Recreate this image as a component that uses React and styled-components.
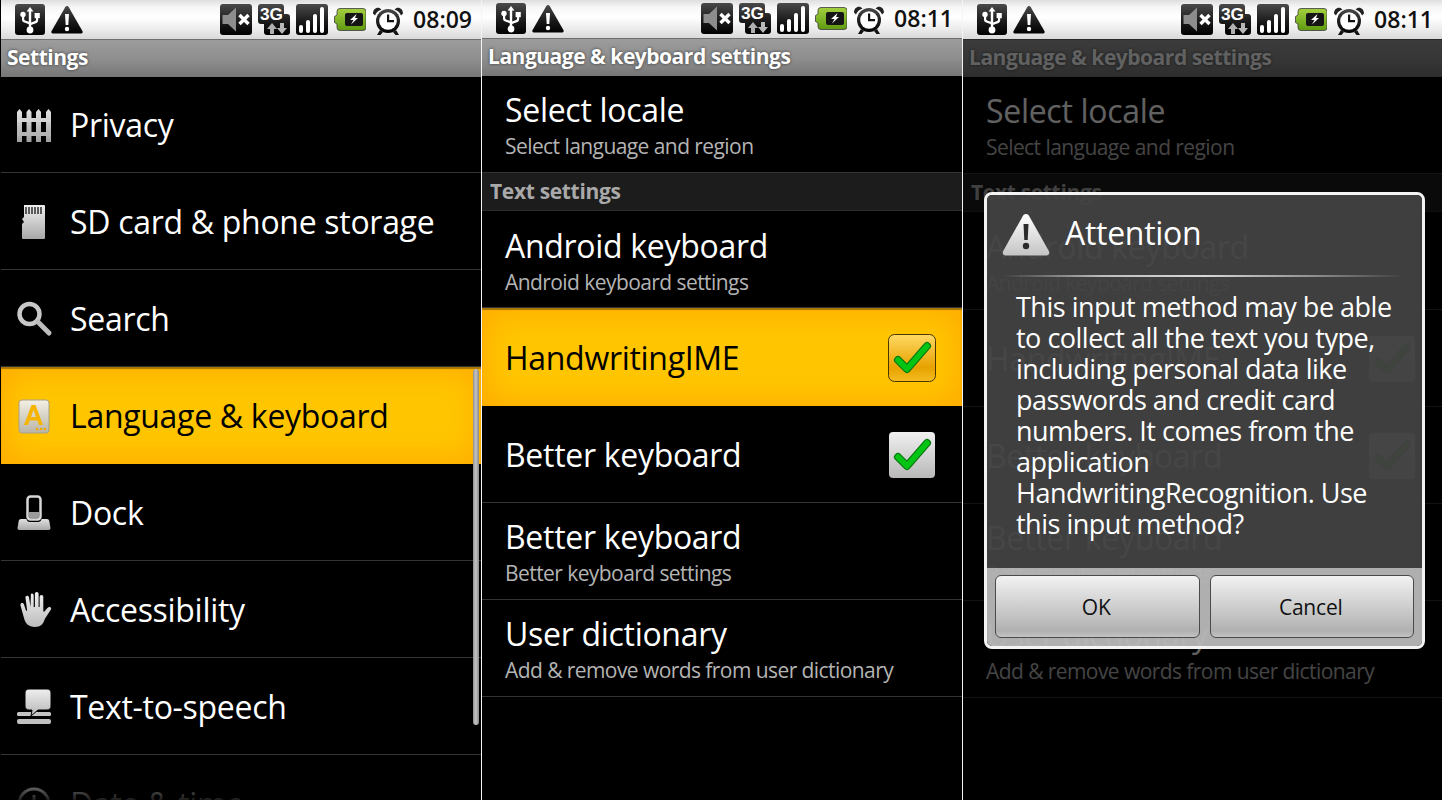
import React from "react";
import styled, { createGlobalStyle } from "styled-components";

const Global = createGlobalStyle`
  html, body { margin: 0; padding: 0; background: #000; }
  body { font-family: "Open Sans", "Noto Sans", sans-serif; }
`;

const Page = styled.div`
  display: flex;
  width: 1442px;
  height: 800px;
  padding-left: 1px;
  box-sizing: border-box;
  overflow: hidden;
  background: #000;
`;

const Phone = styled.section`
  position: relative;
  flex: none;
  width: ${(p) => p.$w || 480}px;
  height: 800px;
  overflow: hidden;
  background: #000;
  border-right: ${(p) => (p.$last ? "none" : "1px solid #f4f4f4")};
`;

const StatusBar = styled.div`
  display: flex;
  align-items: center;
  height: ${(p) => p.$h}px;
  padding: 0 9px 0 13px;
  box-sizing: border-box;
  background: linear-gradient(#dedede 0%, #f6f6f6 18%, #ffffff 45%, #ececec 75%, #d9d9d9 100%);
`;

const StatusLeft = styled.div`
  display: flex;
  align-items: center;
  gap: 5px;
`;

const StatusRight = styled.div`
  display: flex;
  align-items: center;
  gap: 6px;
  margin-left: auto;
`;

const StatusIcon = styled.svg`
  display: block;
  width: 32px;
  height: 32px;
  flex: none;
`;

const Clock = styled.span`
  margin-left: 3px;
  padding-bottom: 2px;
  font-size: 23px;
  font-weight: 600;
  color: #111;
  letter-spacing: 0;
`;

const TitleBar = styled.div`
  display: flex;
  align-items: center;
  height: 38px;
  padding: 0 0 3px 6px;
  box-sizing: border-box;
  border-top: 1px solid #6f6f6f;
  background: linear-gradient(#9c9c9c, #8d8d8d 55%, #767676);
  color: #fff;
  font-size: 21px;
  font-weight: 700;
  letter-spacing: -0.48px;
  text-shadow: 0 0 3px rgba(40, 40, 40, 0.9);
`;

const List = styled.div`
  display: flex;
  flex-direction: column;
`;

const Row = styled.div`
  display: flex;
  align-items: center;
  flex: none;
  height: ${(p) => p.$h || 97}px;
  box-sizing: border-box;
  padding-left: ${(p) => p.$pad || 16}px;
  padding-right: 27px;
  padding-top: ${(p) => (p.$nudge ? 2 : 0)}px;
  border-bottom: 1px solid #343434;
  color: ${(p) => (p.$on ? "#000" : "#fff")};
  ${(p) =>
    p.$on
      ? `
    border-bottom: 0;
    background: #ffc600;
    box-shadow: inset 0 2px 1px #a87600, inset 0 0 30px 6px #ffac00;
  `
      : ""}
`;

const RowIcon = styled.svg`
  display: block;
  flex: none;
  width: 36px;
  height: 36px;
  margin-right: 17px;
`;

const RowBody = styled.div`
  display: flex;
  flex-direction: column;
  flex: 1;
  min-width: 0;
  padding-top: ${(p) => (p.$two ? 1 : 0)}px;
`;

const RowTitle = styled.div`
  font-size: 32px;
  line-height: 42px;
  letter-spacing: -0.3px;
  white-space: nowrap;
  color: ${(p) => p.$color || "inherit"};
`;

const RowSub = styled.div`
  font-size: 21px;
  line-height: 28px;
  margin-top: 1px;
  letter-spacing: -0.57px;
  color: #b4b4b4;
  white-space: nowrap;
`;

const SectionHead = styled.div`
  display: flex;
  align-items: center;
  height: 38px;
  padding: 0 0 1px 8px;
  box-sizing: border-box;
  background: #1c1c1c;
  border-bottom: 1px solid #2c2c2c;
  color: #a9a9a9;
  font-size: 21px;
  font-weight: 700;
  letter-spacing: -0.33px;
`;

const Check = styled.svg`
  display: block;
  flex: none;
  width: 48px;
  height: 48px;
  margin-right: -1px;
`;

const ScrollThumb = styled.div`
  position: absolute;
  left: 472px;
  top: 369px;
  width: 6px;
  height: 356px;
  border-radius: 3px;
  background: linear-gradient(90deg, #8e8e8e, #c4c4c4 45%, #8a8a8a);
`;

const Fade = styled.div`
  position: absolute;
  left: 0;
  right: 0;
  bottom: 0;
  height: 24px;
  background: linear-gradient(rgba(0, 0, 0, 0), rgba(0, 0, 0, 0.8));
`;

const Dim = styled.div`
  position: absolute;
  left: 0;
  right: 0;
  top: 39px;
  bottom: 0;
  background: rgba(0, 0, 0, 0.62);
`;

const Dialog = styled.div`
  position: absolute;
  left: 21px;
  top: 192px;
  width: 441px;
  height: 457px;
  box-sizing: border-box;
  display: flex;
  flex-direction: column;
  border: 3px solid #f4f4f4;
  border-radius: 8px;
  overflow: hidden;
`;

const DialogTop = styled.div`
  flex: none;
  height: 373px;
  display: flex;
  flex-direction: column;
  background: rgba(68, 68, 68, 0.93);
`;

const DialogHead = styled.div`
  flex: none;
  display: flex;
  align-items: center;
  height: 80px;
  padding: 0 0 0 15px;
  box-sizing: border-box;
`;

const DialogTitle = styled.span`
  padding-bottom: 6px;
  color: #fff;
  font-size: 32px;
  letter-spacing: -0.3px;
`;

const DialogIcon = styled.svg`
  display: block;
  width: 48px;
  height: 44px;
  margin-right: 15px;
`;

const Rule = styled.div`
  flex: none;
  height: 2px;
  margin: 0 18px 0 16px;
  background: linear-gradient(90deg, rgba(255,255,255,0), #bdbdbd 25%, #d8d8d8 50%, #8e8e8e 78%, rgba(255,255,255,0));
`;

const Message = styled.div`
  padding: 14px 16px 0 29px;
  color: #fff;
  font-size: 27px;
  line-height: 31px;
  letter-spacing: -0.5px;
`;

const ButtonBar = styled.div`
  flex: 1;
  display: flex;
  gap: 10px;
  padding: 7px 8px;
  box-sizing: border-box;
  background: rgba(184, 184, 184, 0.95);
`;

const DialogButton = styled.div`
  flex: 1;
  display: flex;
  align-items: center;
  justify-content: center;
  height: 63px;
  padding-right: 2px;
  box-sizing: border-box;
  border: 1px solid #4a4a4a;
  border-radius: 6px;
  background: linear-gradient(#f2f2f2, #dcdcdc 30%, #c0c0c0 70%, #b0b0b0 90%, #c4c4c4);
  color: #111;
  font-size: 21px;
  letter-spacing: -0.2px;
`;

const Grad = ({ id, from = "#f0f0f0", to = "#a8a8a8" }) => (
  <defs>
    <linearGradient id={id} x1="0" y1="0" x2="0" y2="1">
      <stop offset="0" stopColor={from} />
      <stop offset="1" stopColor={to} />
    </linearGradient>
  </defs>
);

const StatusDefs = () => (
  <defs>
    <linearGradient id="sbBox" x1="0" y1="0" x2="0" y2="1">
      <stop offset="0" stopColor="#4a4a4a" />
      <stop offset="0.55" stopColor="#1c1c1c" />
      <stop offset="1" stopColor="#000" />
    </linearGradient>
  </defs>
);

const UsbIcon = () => (
  <StatusIcon viewBox="0 0 32 32">
    <StatusDefs />
    <rect x="1" y="0" width="30" height="31" rx="3" fill="url(#sbBox)" />
    <path d="M16 3l3.400 4.400h-2.200V24h-2.400V7.400h-2.200z" fill="#fff" />
    <circle cx="16" cy="26" r="3.400" fill="#fff" />
    <path d="M8 12v3.200c0 2.200 1 3 3 3.600l4 1.400v-2.400l-3.200-1.100c-1.200-.4-1.600-.8-1.600-1.800V12z" fill="#fff" />
    <circle cx="9" cy="10.500" r="2.700" fill="#fff" />
    <path d="M22 14v1.500c0 1-.4 1.400-1.600 1.800L17 18.500v2.400l4.200-1.400c2-.7 3-1.600 3-3.800V14z" fill="#fff" />
    <rect x="20.600" y="9" width="5.200" height="5.200" fill="#fff" />
  </StatusIcon>
);

const WarnIcon = () => (
  <StatusIcon viewBox="0 0 32 32">
    <StatusDefs />
    <path d="M16 2c.8 0 1.300.4 1.800 1.200L31.400 27c.7 1.400 0 2.600-1.600 2.600H2.200C.6 29.600-.1 28.400.6 27L14.200 3.200C14.700 2.400 15.200 2 16 2z" fill="url(#sbBox)" />
    <path d="M14 10h4l-.7 11h-2.600z" fill="#fff" />
    <circle cx="16" cy="25" r="2.200" fill="#fff" />
  </StatusIcon>
);

const MuteIcon = () => (
  <StatusIcon viewBox="0 0 32 32">
    <StatusDefs />
    <rect x="0" y="0" width="32" height="31" rx="3" fill="url(#sbBox)" />
    <path d="M2.500 11H8l8-7.500v24L8 20H2.500z" fill="#8d8d8d" />
    <path d="M19.500 11l9 9M28.500 11l-9 9" stroke="#fff" strokeWidth="3.400" fill="none" />
  </StatusIcon>
);

const ThreeGIcon = () => (
  <StatusIcon viewBox="0 0 32 32">
    <StatusDefs />
    <path d="M3 0h20a3 3 0 0 1 3 3v7h3a3 3 0 0 1 3 3v15a3 3 0 0 1-3 3H9a3 3 0 0 1-3-3V20H3a3 3 0 0 1-3-3V3a3 3 0 0 1 3-3z" fill="url(#sbBox)" />
    <text x="2" y="16" textLength="23" lengthAdjust="spacingAndGlyphs" fontFamily="'Liberation Sans', sans-serif" fontWeight="700" fontSize="17" fill="#fff">3G</text>
    <path d="M14 19l-5 6h3v5h4v-5h3z" fill="#b0b0b0" />
    <path d="M24 30l5-6h-3v-5h-4v5h-3z" fill="#b8b8b8" />
  </StatusIcon>
);

const SignalIcon = () => (
  <StatusIcon viewBox="0 0 32 32">
    <StatusDefs />
    <rect x="0" y="0" width="32" height="31" rx="3" fill="url(#sbBox)" />
    <rect x="3" y="21" width="4" height="8" rx="2" fill="#fff" />
    <rect x="10" y="16" width="4" height="13" rx="2" fill="#fff" />
    <rect x="17" y="10" width="4" height="19" rx="2" fill="#fff" />
    <rect x="24" y="3" width="4" height="26" rx="2" fill="#fff" />
  </StatusIcon>
);

const BatteryIcon = () => (
  <StatusIcon viewBox="0 0 32 32">
    <defs>
      <linearGradient id="sbGreen" x1="0" y1="0" x2="0" y2="1">
        <stop offset="0" stopColor="#a4d040" />
        <stop offset="1" stopColor="#5f9a10" />
      </linearGradient>
    </defs>
    <path d="M6 4.500h23a3 3 0 0 1 3 3v16a3 3 0 0 1-3 3H6a3 3 0 0 1-3-3V20l-2.500-1.500v-6L3 11V7.500a3 3 0 0 1 3-3z" fill="url(#sbGreen)" stroke="#3b3b3b" strokeWidth="0.800" />
    <rect x="11" y="9" width="18" height="13" rx="2" fill="#151515" />
    <path d="M22.500 10l-6.500 6h3.500l-2.500 4.500 7-6.500H21z" fill="#fff" />
  </StatusIcon>
);

const AlarmIcon = () => (
  <StatusIcon viewBox="0 0 32 32">
    <StatusDefs />
    <path d="M1 9.500C1 5.500 4 3 7.500 4l2 1.500C6.500 6.500 4 8.500 3 11.500z" fill="#222" />
    <path d="M31 9.500C31 5.500 28 3 24.500 4l-2 1.500c3 1 5.500 3 6.500 6z" fill="#222" />
    <path d="M8 26l-3 5h3.500l2.500-3zM24 26l3 5h-3.500l-2.500-3z" fill="#111" />
    <circle cx="16" cy="17" r="12" fill="url(#sbBox)" />
    <circle cx="16" cy="17" r="8.800" fill="#fff" />
    <path d="M15 10.500h2.200V16H22v2.200h-7z" fill="#111" />
  </StatusIcon>
);

const StatusRow = ({ h, time }) => (
  <StatusBar $h={h}>
    <StatusLeft>
      <UsbIcon />
      <WarnIcon />
    </StatusLeft>
    <StatusRight>
      <MuteIcon />
      <ThreeGIcon />
      <SignalIcon />
      <BatteryIcon />
      <AlarmIcon />
      <Clock>{time}</Clock>
    </StatusRight>
  </StatusBar>
);

const Fence = () => (
  <RowIcon viewBox="0 0 36 36">
    <Grad id="gFence" from="#e6e6e6" to="#a0a0a0" />
    <g fill="url(#gFence)">
      <path d="M0 35V5l2.500-3L5 5v30z" />
      <path d="M9.500 35V5L12 2l2.500 3v30z" />
      <path d="M19 35V5l2.500-3L24 5v30z" />
      <path d="M29 35V5l2.500-3L34 5v30z" />
    </g>
    <rect x="0" y="11" width="34" height="4" fill="#d4d4d4" />
    <rect x="0" y="25" width="34" height="4" fill="#b4b4b4" />
  </RowIcon>
);

const SdCard = () => (
  <RowIcon viewBox="0 0 36 36">
    <Grad id="gSd" />
    <path d="M7 1h20a1 1 0 0 1 1 1v32a1 1 0 0 1-1 1H6a1 1 0 0 1-1-1V20l2-2-2-3 2-2z" fill="url(#gSd)" />
    <path d="M9 3v7M12 3v7M15 3v7M18 3v7M21 3v7M24 3v7" stroke="#222" strokeWidth="1.400" />
  </RowIcon>
);

const SearchIcon = () => (
  <RowIcon viewBox="0 0 36 36">
    <circle cx="12.500" cy="13" r="10" fill="none" stroke="#c8c8c8" strokeWidth="4.500" />
    <path d="M21 21l11 11" stroke="#bdbdbd" strokeWidth="5" strokeLinecap="round" />
  </RowIcon>
);

const LangIcon = () => (
  <RowIcon viewBox="0 0 36 36">
    <Grad id="gLang" from="#f4f0e4" to="#b8b4a8" />
    <rect x="2" y="2" width="30" height="33" rx="3" fill="url(#gLang)" stroke="#a8a08a" strokeWidth="1" />
    <path d="M14.500 7h4L26 27h-4l-1.600-4.500h-7.800L11 27H7zM14 19h5l-2.500-7z" fill="#f6b400" fillRule="evenodd" />
    <circle cx="20" cy="31" r="1.300" fill="#f0a800" />
    <circle cx="24" cy="31" r="1.300" fill="#f0a800" />
    <circle cx="28" cy="31" r="1.300" fill="#f0a800" />
  </RowIcon>
);

const DockIcon = () => (
  <RowIcon viewBox="0 0 36 36">
    <Grad id="gDock" from="#e0e0e0" to="#a8a8a8" />
    <rect x="10.500" y="1.500" width="13" height="23" rx="3" fill="#000" stroke="#d8d8d8" strokeWidth="2.500" />
    <path d="M12 17h10v5a1 1 0 0 1-1 1h-8a1 1 0 0 1-1-1z" fill="#9a9a9a" />
    <path d="M4 24h5.500c.3 1.800 1.500 3 3.500 3h8c2 0 3.200-1.200 3.500-3H30c1.200 0 2 .8 2.300 2l1.200 7c0 1.200-.6 2-2 2H2.500c-1.400 0-2-.8-2-2l1.200-7C2 24.800 2.800 24 4 24z" fill="url(#gDock)" />
  </RowIcon>
);

const HandIcon = () => (
  <RowIcon viewBox="0 0 36 36">
    <Grad id="gHand" from="#f0f0f0" to="#bcbcbc" />
    <path
      d="M15 1.500c1.200 0 1.700 1 1.700 2.200V15h1.200V2c0-1.200.8-2 1.900-2s1.800.8 1.800 2v13h1V5c0-1.200.8-2 1.900-2s1.800.8 1.800 2v14c0 .8.600 1 1.100.4l3-3.400c1-1 2.300-1.300 3.200-.6.800.6.700 1.600 0 2.600l-5.800 9C26.500 32 23.500 35 18 35c-6.500 0-10-4-11-9L3.500 13.500c-.3-1.200.2-2.200 1.200-2.500 1-.3 1.900.3 2.300 1.400l2 6c.3.700 1.100.6 1.100-.2L8.500 6c-.2-1.200.5-2.100 1.500-2.200 1-.1 1.800.6 2 1.800L13.500 15l.4-13c.1-.3.500-.5 1.100-.5z"
      fill="url(#gHand)"
    />
  </RowIcon>
);

const SpeechIcon = () => (
  <RowIcon viewBox="0 0 36 36">
    <Grad id="gSpeech" from="#efefef" to="#b6b6b6" />
    <rect x="0" y="23" width="34" height="4" rx="1.500" fill="#c4c4c4" />
    <rect x="0" y="30" width="34" height="5" rx="2" fill="#c0c0c0" />
    <path d="M12 0h18c2.500 0 4 1.500 4 4v13c0 2.500-1.500 4-4 4H21l-7 6 1-6h-3c-2.500 0-4-1.500-4-4V4c0-2.500 1.500-4 4-4z" fill="url(#gSpeech)" stroke="#000" strokeWidth="1" />
  </RowIcon>
);

const ClockIcon = () => (
  <RowIcon viewBox="0 0 36 36">
    <circle cx="17" cy="18" r="15" fill="none" stroke="#9c9c9c" strokeWidth="3" />
    <path d="M17 9v10" stroke="#9c9c9c" strokeWidth="3" />
  </RowIcon>
);

const CheckBox = ({ on }) => {
  const id = on ? "cbOn" : "cbOff";
  return (
    <Check viewBox="0 0 48 48">
      <defs>
        <linearGradient id={id} x1="0" y1="0" x2="0" y2="1">
          {on ? (
            <>
              <stop offset="0" stopColor="#ffd964" />
              <stop offset="0.7" stopColor="#e7a200" />
              <stop offset="1" stopColor="#f4bc20" />
            </>
          ) : (
            <>
              <stop offset="0" stopColor="#f0f0f0" />
              <stop offset="1" stopColor="#b8b8b8" />
            </>
          )}
        </linearGradient>
      </defs>
      {on ? (
        <rect x="0.500" y="0.500" width="47" height="47" rx="6" fill={`url(#${id})`} stroke="#4a3500" strokeWidth="1" />
      ) : (
        <rect x="1" y="1" width="46" height="46" rx="4" fill={`url(#${id})`} />
      )}
      <path d="M10 26l9 9L39 12" fill="none" stroke="#0a7a10" strokeWidth="8" strokeLinecap="round" strokeLinejoin="round" />
      <path d="M10 26l9 9L39 12" fill="none" stroke="#04c414" strokeWidth="5.500" strokeLinecap="round" strokeLinejoin="round" />
    </Check>
  );
};

const DialogWarn = () => (
  <DialogIcon viewBox="0 0 48 44">
    <Grad id="gDlgWarn" from="#ffffff" to="#c4c4c4" />
    <path d="M24 1c1.500 0 2.500.8 3.300 2.200L46.800 38c1.200 2.500 0 4.500-2.800 4.500H4c-2.800 0-4-2-2.800-4.500L20.700 3.200C21.500 1.800 22.500 1 24 1z" fill="url(#gDlgWarn)" />
    <path d="M21.500 11h5l-.8 16h-3.400z" fill="#2a2a2a" />
    <circle cx="24" cy="33" r="3.200" fill="#2a2a2a" />
  </DialogIcon>
);

const settings = [
  { icon: <Fence />, label: "Privacy" },
  { icon: <SdCard />, label: "SD card & phone storage" },
  { icon: <SearchIcon />, label: "Search" },
  { icon: <LangIcon />, label: "Language & keyboard", on: true },
  { icon: <DockIcon />, label: "Dock" },
  { icon: <HandIcon />, label: "Accessibility" },
  { icon: <SpeechIcon />, label: "Text-to-speech" },
  { icon: <ClockIcon />, label: "Date & time", faded: true },
];

const KeyboardList = ({ highlight }) => (
  <List>
    <Row $pad={23}>
      <RowBody $two>
        <RowTitle>Select locale</RowTitle>
        <RowSub>Select language and region</RowSub>
      </RowBody>
    </Row>
    <SectionHead>Text settings</SectionHead>
    <Row $h={highlight ? 97 : 98} $pad={23} $nudge={highlight}>
      <RowBody $two>
        <RowTitle>Android keyboard</RowTitle>
        <RowSub>Android keyboard settings</RowSub>
      </RowBody>
    </Row>
    <Row $on={highlight} $h={highlight ? 98 : 97} $pad={23} $nudge>
      <RowBody>
        <RowTitle>HandwritingIME</RowTitle>
      </RowBody>
      <CheckBox on={highlight} />
    </Row>
    <Row $pad={23} $nudge>
      <RowBody>
        <RowTitle>Better keyboard</RowTitle>
      </RowBody>
      <CheckBox />
    </Row>
    <Row $pad={23}>
      <RowBody $two>
        <RowTitle>Better keyboard</RowTitle>
        <RowSub>Better keyboard settings</RowSub>
      </RowBody>
    </Row>
    <Row $pad={23}>
      <RowBody $two>
        <RowTitle>User dictionary</RowTitle>
        <RowSub>Add &amp; remove words from user dictionary</RowSub>
      </RowBody>
    </Row>
  </List>
);

export default function App() {
  return (
    <Page>
      <Global />
      <Phone>
        <StatusRow h={39} time="08:09" />
        <TitleBar>Settings</TitleBar>
        <List>
          {settings.map((s, i) => (
            <Row key={s.label} $on={s.on} $h={i === 0 ? 96 : 97} $nudge={i > 0 && !s.on}>
              {s.icon}
              <RowTitle $color={s.faded ? "#8c8c8c" : undefined}>{s.label}</RowTitle>
            </Row>
          ))}
        </List>
        <ScrollThumb />
        <Fade />
      </Phone>
      <Phone>
        <StatusRow h={38} time="08:11" />
        <TitleBar>Language &amp; keyboard settings</TitleBar>
        <KeyboardList highlight />
      </Phone>
      <Phone $w={479} $last>
        <StatusRow h={39} time="08:11" />
        <TitleBar>Language &amp; keyboard settings</TitleBar>
        <KeyboardList />
        <Dim />
        <Dialog>
          <DialogTop>
            <DialogHead>
              <DialogWarn />
              <DialogTitle>Attention</DialogTitle>
            </DialogHead>
            <Rule />
            <Message>
              This input method may be able to collect all the text you type, including personal data like passwords and credit card numbers. It comes from the application HandwritingRecognition. Use this input method?
            </Message>
          </DialogTop>
          <ButtonBar>
            <DialogButton>OK</DialogButton>
            <DialogButton>Cancel</DialogButton>
          </ButtonBar>
        </Dialog>
      </Phone>
    </Page>
  );
}
